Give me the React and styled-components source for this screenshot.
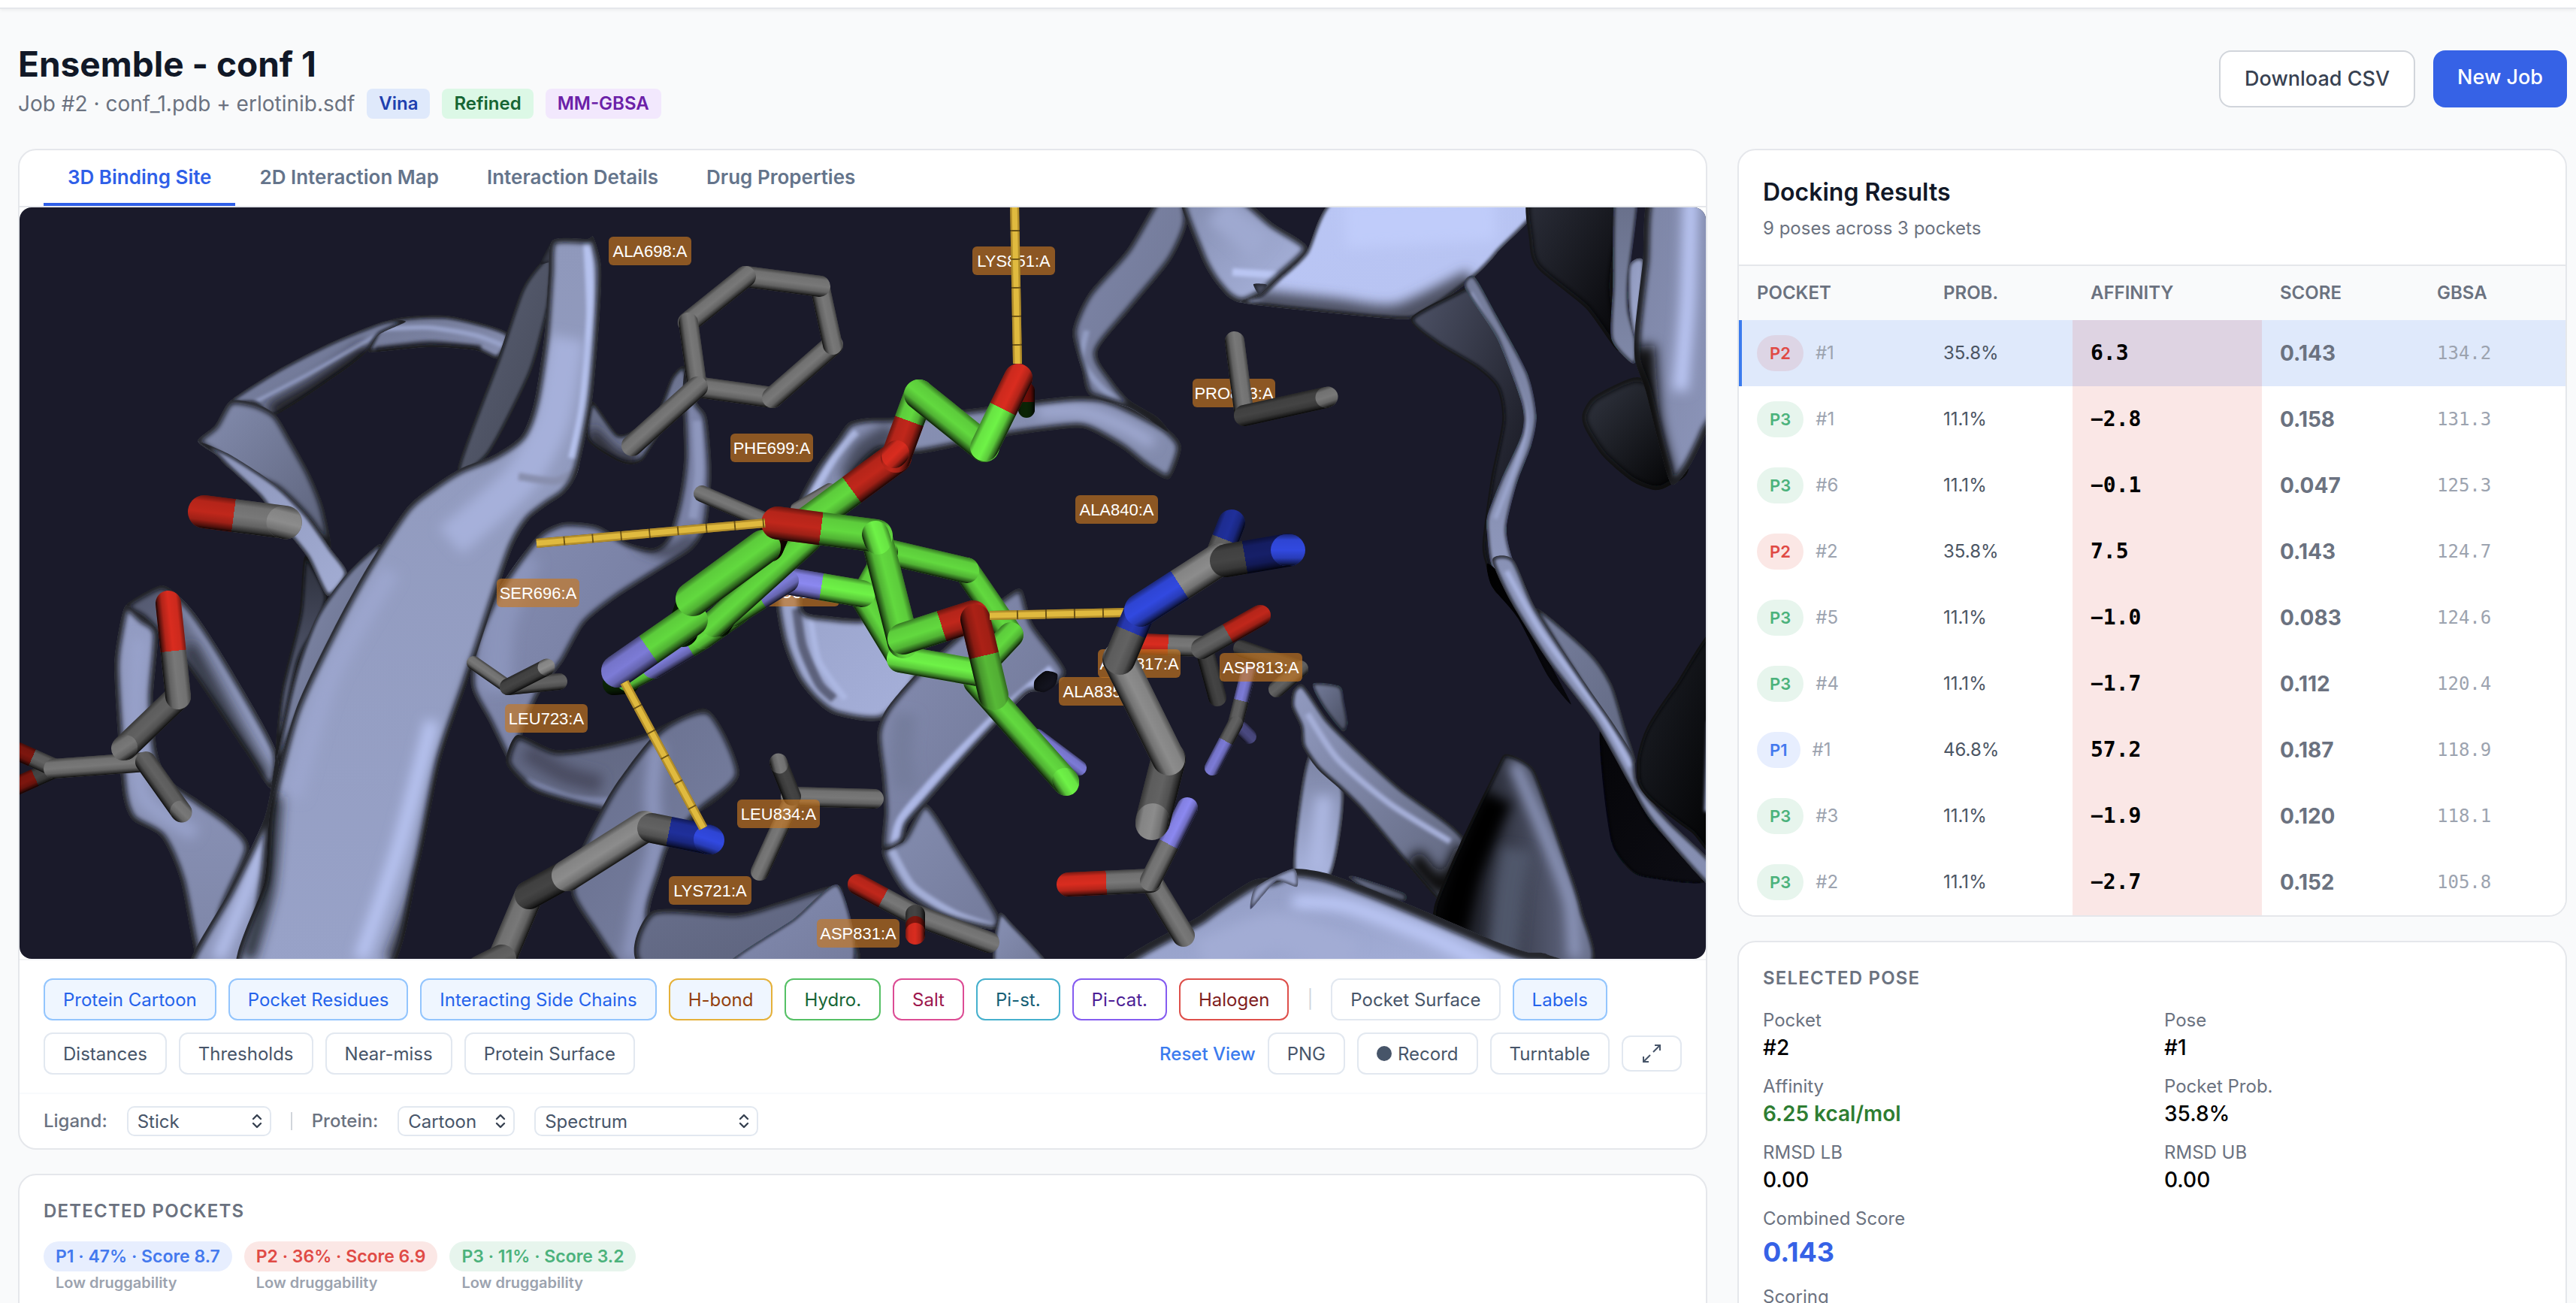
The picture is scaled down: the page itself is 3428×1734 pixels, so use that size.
import { useState } from "react";
import styled, { createGlobalStyle } from "styled-components";

const GlobalStyle = createGlobalStyle`
    * {
        box-sizing: border-box;
    }
    body {
        margin: 0;
        background: #f9fafb;
        color: #000;
        font-family: Inter, "Liberation Sans", sans-serif;
        font-size: 24px;
        line-height: 32px;
    }
    h1, h2, h3, p, dl, dd {
        margin: 0;
    }
    button, select {
        font-family: inherit;
    }
`

//---------------- molecule scene ----------------

// turns "x,y x,y" into numbers
const parse = (pts) => pts.split(" ").map((pt) => pt.split(",").map(Number))

// soft curve through all the points
const curve = (pts, closed) => {
    const p = parse(pts)
    const n = p.length
    const at = (i) => (closed ? p[(i + n) % n] : p[Math.max(0, Math.min(n - 1, i))])
    let d = `M${p[0]}`
    for (let i = 0; i < (closed ? n : n - 1); i++) {
        const [a, b, c, e] = [at(i - 1), at(i), at(i + 1), at(i + 2)]
        d += `C${b[0] + (c[0] - a[0]) / 8},${b[1] + (c[1] - a[1]) / 8} ${c[0] - (e[0] - b[0]) / 8},${c[1] - (e[1] - b[1]) / 8} ${c}`
    }
    return closed ? d + "Z" : d
}

// p: outline, a/b: fill from and to, dir: gradient vector, e: edge darkness width, h: lines of light or shade
const ribbons = [
    // far left loop
    { p: "167,806 214,779 240,795 265,824 306,888 367,998 360,1049 326,1000 255,895 210,843 190,823", a: "#50556b", b: "#8a93b6", e: 10, h: [["240,795 300,890 366,1010", 14, "#9aa4cc"], ["250,860 300,950 352,1036", 16, "#2a2d38"]] },
    { p: "167,806 156,850 152,888 156,966 163,1056 176,1091 214,1114 240,1172 265,1290 296,1290 296,1217 332,1130 306,1094 265,1065 224,1036 209,998 204,927 210,843 190,823", a: "#949dc4", b: "#7d85a6", dir: [0, 0, 0, 1], e: 12, h: [["185,850 180,950 190,1060 260,1110", 20, "#98a2cb"]] },
    // upper left loop
    { p: "490,466 510,430 546,421 602,421 676,443 663,477 632,466 571,462 505,468", a: "#6c738f", b: "#8991b4", e: 8, h: [["505,438 571,436 632,446 670,460", 6, "#9aa4cc"], ["500,466 571,458 640,464", 10, "#3a3e4d"]] },
    { p: "306,534 370,492 440,456 510,428 540,428 505,445 490,466 459,492 367,552 339,537", a: "#7b83a4", b: "#6b728f", e: 6, h: [["360,550 420,516 492,466", 24, "#1b1c24"], ["339,535 410,498 505,444", 4, "#9aa4cc"]] },
    { p: "406,740 436,793 420,840 398,882 368,1014 368,978 375,914 398,817", a: "#2c2f3b", b: "#6f7693", dir: [0, 0, 0, 1], e: 8 },
    { p: "263,587 286,566 306,534 339,537 367,552 388,586 413,631 431,676 440,730 408,689 367,650 306,624 288,606", a: "#858eb0", b: "#5a6078", e: 10 },
    { p: "263,587 306,605 367,645 408,685 440,730 462,763 436,793 408,740 367,690 345,660 306,624 288,606", a: "#8992b6", b: "#a3add4", e: 6 },
    { p: "505,724 462,763 423,817 398,880 380,950 366,1030 393,960 444,850 500,753", a: "#8790b2", b: "#5e647e", e: 6 },
    { p: "250,1290 306,1184 352,1088 368,1005 372,1050 358,1110 352,1172 326,1290", a: "#8c95ba", b: "#8c95ba", e: 12, h: [["290,1276 330,1180 354,1100", 16, "#b9c5f2"]] },
    // strands behind the phenyl ring
    { p: "788,534 822,577 846,570 874,548 893,502 910,487 915,520 870,591 855,613 838,618 817,611 781,584", a: "#5d637b", b: "#7c84a5", e: 8, h: [["784,575 820,610 850,612", 18, "#20222b"]] },
    { p: "913,488 927,534 941,556 947,627 941,698 922,731 879,759 822,795 779,830 750,880 720,920 699,966 691,998 686,1030 650,960 627,914 632,856 663,785 714,714 745,696 770,695 798,700 836,722 870,729 889,713 903,663 910,609 908,527", a: "#8a93b8", b: "#70779a", e: 10, h: [["850,722 890,735 925,715", 14, "#3a3e4d"], ["700,740 665,830 660,920", 40, "#8b94bb"], ["928,560 930,630 922,690", 12, "#8e97bd"]] },
    { p: "689,978 740,998 800,991 855,977 908,953 944,946 984,1030 932,1080 860,1090 798,1080 714,1056 683,1030 673,1011", a: "#5c627c", b: "#6d7491", e: 12, h: [["700,1040 760,1062 812,1066", 10, "#7c84a8"], ["700,1000 750,1030 800,1044", 24, "#484c60"]] },
    { p: "879,970 944,946 984,1030 932,1080 893,1123 879,1163 865,1210 860,1290 826,1290 790,1240 760,1190 769,1140 793,1090 822,1040", a: "#666d8b", b: "#7b83a5", e: 10, h: [["874,990 868,1060 872,1130 852,1200 838,1276", 20, "#8e97bf"]] },
    { p: "867,1213 980,1215 1037,1200 1116,1178 1124,1220 1132,1290 860,1290", a: "#69708d", b: "#5b617a", e: 10 },
    { p: "1116,1178 1132,1290 965,1290 1056,1223", a: "#848db2", b: "#747b9c", e: 4 },
    // loop behind the ligand
    { p: "1061,673 1085,623 1113,584 1130,562 1157,556 1195,555 1300,543 1381,532 1429,527 1467,529 1504,543 1553,570 1572,595 1556,637 1526,623 1493,597 1450,573 1424,570 1338,581 1223,604 1170,600 1130,640 1100,672", a: "#8991b5", b: "#8089aa", e: 12, h: [["1080,660 1110,610 1140,575", 10, "#b0bbe6"], ["1130,640 1150,600 1190,575", 30, "#454a5c"], ["1381,548 1440,548 1490,565 1535,590", 14, "#a5afd8"]] },
    { p: "1032,800 1042,857 1061,903 1085,933 1113,952 1176,957 1225,893 1190,820 1142,823 1104,820 1070,812 1066,760 1040,760", a: "#98a2c9", b: "#a6b0da", e: 12, h: [["1060,810 1068,860 1090,910 1110,930", 12, "#5b617a"], ["1078,820 1090,880 1125,930", 8, "#acb7e2"]] },
    { p: "1233,1070 1281,1140 1329,1217 1322,1237 1252,1220 1204,1190 1180,1153 1174,1130 1202,1115", a: "#858eb1", b: "#737a9a", e: 10, h: [["1186,1130 1215,1180 1270,1216 1322,1234", 10, "#a3add6"]] },
    { p: "1329,1217 1348,1230 1398,1290 1324,1290", a: "#8992b6", b: "#6f7694", e: 6 },
    { p: "1360,785 1375,830 1419,893 1391,920 1367,923 1324,967 1276,1020 1233,1070 1209,1097 1202,1120 1174,1130 1176,1080 1173,1033 1167,977 1180,943 1219,897 1270,850 1338,793", a: "#878fb4", b: "#6c7391", e: 10, h: [["1400,890 1330,950 1260,1020 1200,1090 1190,1130", 12, "#adb8e6"], ["1205,950 1200,1000 1205,1050", 30, "#757d9c"]] },
    { p: "1377,905 1391,893 1407,897 1404,912 1390,921 1377,918", a: "#08090c", b: "#1a1a2a", e: 2 },
    // top right
    { p: "1546,255 1572,255 1580,297 1558,347 1504,413 1461,468 1480,505 1504,533 1540,555 1555,575 1504,543 1450,526 1439,491 1427,441 1448,391 1500,331", a: "#7f87aa", b: "#6d7490", e: 10, h: [["1446,440 1440,480 1470,520 1530,560", 8, "#929cc2"]] },
    { p: "1570,255 1640,255 1694,297 1740,330 1702,370 1678,392 1653,403 1634,395 1613,370 1596,337", a: "#8089ab", b: "#adb8e2", e: 12, h: [["1640,362 1700,366", 10, "#bac6f3"], ["1620,280 1680,330", 40, "#9fa9d0"]] },
    { p: "1792,255 2050,255 1992,337 1960,370 1916,403 1881,423 1851,424 1775,417 1653,403 1678,392 1702,370 1737,337", a: "#bac6f5", b: "#b7c3f1", e: 6, h: [["1670,402 1775,414 1860,422 1960,375", 34, "#4d5163"], ["1790,300 1990,290", 60, "#c0ccfa"]] },
    { p: "1668,378 1686,379 1676,392", a: "#30333f", b: "#5a6078", e: 2 },
    { p: "1878,423 1949,383 1962,368 1992,420 2033,497 2045,553 2038,593 2019,643 2005,703 2014,747 2033,790 1992,790 1976,747 1973,720 1984,637 1999,560 1992,517 1965,490 1911,457", a: "#50556a", b: "#0a0a10", e: 8 },
    { p: "1949,383 1962,368 1992,420 2033,497 2045,553 2038,593 2019,643 2005,703 2014,747 2033,790 2003,790 1984,750 1979,713 1979,687 1998,637 2025,577 2025,537 1992,450", a: "#747c9a", b: "#919abf", dir: [0, 0, 0, 1], e: 4, h: [["1957,390 2000,470 2030,550 2024,600 1990,690", 5, "#9ea8d0"]] },
    { p: "2044,810 2115,867 2145,910 2163,967 2177,1013 2160,1010 2110,920", a: "#777f9e", b: "#606780", e: 6 },
    { p: "2130,970 2165,1030 2198,1093 2270,1172 2192,1168 2168,1157 2145,1123 2133,1043", a: "#050508", b: "#0d0d14", e: 4 },
    { p: "1979,750 2000,770 2050,860 2091,937 2060,900 2020,823 1985,780", a: "#000000", b: "#0a0a10", e: 2 },
    { p: "1986,745 2014,745 2044,810 2110,910 2145,960 2174,1007 2180,1043 2222,1093 2280,1150 2280,1185 2198,1093 2168,1043 2121,960 2060,880 2010,800", a: "#8992b6", b: "#858eb1", e: 6, h: [["2005,760 2050,840 2130,950 2170,1020", 7, "#a8b3df"]] },
    { p: "2038,255 2152,255 2146,380 2155,467 2110,410 2046,357 2035,320", a: "#2d303c", b: "#050507", dir: [0, 0, 1, 1], e: 10 },
    { p: "2149,255 2180,255 2168,370 2168,413 2177,450 2177,481 2168,481 2144,450 2146,380", a: "#666d87", b: "#8089a9", dir: [0, 0, 0, 1], e: 4 },
    { p: "2168,353 2188,350 2177,450 2168,413", a: "#8d96ba", b: "#a3add4", e: 3 },
    { p: "2179,502 2122,527 2106,550 2109,570 2133,607 2171,640 2201,652 2220,647 2247,623 2220,530", a: "#343844", b: "#000000", e: 12 },
    { p: "2197,255 2290,255 2290,520 2270,577 2247,623 2225,645 2210,600 2190,520 2176,480 2176,437 2186,350", a: "#7b83a3", b: "#8e97bc", e: 16, h: [["2250,262 2246,400 2236,520", 20, "#bdc9f7"], ["2188,460 2196,560 2216,640", 28, "#07070a"]] },
    { p: "2290,840 2228,913 2192,967 2179,1007 2180,1043 2198,1067 2250,1107 2290,1130", a: "#1f222a", b: "#000000", e: 8, h: [["2276,960 2272,1080", 8, "#a3add4"]] },
    // bottom right
    { p: "1795,1168 1807,1167 1868,1188 1866,1200 1820,1185", a: "#6b728e", b: "#4b5063", e: 4 },
    { p: "1741,1005 1788,1050 1771,1165 1721,1160", a: "#7a82a2", b: "#aab5df", dir: [0, 0, 0, 1], e: 6, h: [["1762,1060 1752,1160", 22, "#adb8e2"]] },
    { p: "1747,910 1783,913 1789,933 1794,963 1786,973 1760,940", a: "#747c9b", b: "#484d60", e: 4 },
    { p: "1721,918 1735,912 1765,955 1789,980 1824,1013 1866,1050 1950,1118 1925,1200 1913,1197 1866,1143 1813,1080 1783,1050 1753,1023 1733,993 1730,967 1718,940", a: "#929bc1", b: "#5d637a", e: 8, h: [["1740,950 1780,1010 1850,1070 1930,1120", 8, "#a5afd8"], ["1880,1140 1920,1180 1950,1130", 26, "#0c0c11"]] },
    { p: "2002,1004 2020,1008 2041,1023 2056,1060 2085,1143 2106,1210 2112,1290 1900,1290 1907,1217 1913,1193 1943,1123 1991,1023", a: "#000000", b: "#6c7390", dir: [0, 0, 1, 0], e: 8, h: [["2015,1015 2060,1120 2090,1200 2096,1276", 16, "#929bc1"], ["1930,1240 1950,1160 1992,1060", 44, "#000000"], ["2000,1276 2010,1180 2020,1130", 40, "#50566a"]] },
    { p: "1500,1300 1599,1217 1664,1173 1694,1167 1722,1156 1765,1162 1824,1183 1907,1217 1991,1253 2032,1267 2059,1270 2090,1300", a: "#8e98bf", b: "#a9b4de", e: 22, h: [["1720,1200 1790,1205 1900,1245 1990,1290", 18, "#bdc9f8"], ["1600,1276 1700,1240 1800,1276", 50, "#a2acd4"]] },
    { p: "1664,1210 1668,1185 1684,1172 1722,1156 1726,1180 1700,1172 1682,1190", a: "#8b94b9", b: "#a5afd8", e: 3 },
    // big strand in front
    { p: "719,350 735,340 732,400 724,437 705,500 650,605 609,624 663,476 694,386", a: "#5c6276", b: "#444857", e: 6 },
    { p: "719,350 735,320 737,345 727,350", a: "#1e2029", b: "#434756", e: 2 },
    { p: "735,320 781,318 790,316 800,354 798,420 788,534 769,627 752,656 729,672 704,692 683,727 658,798 622,908 587,1011 556,1159 510,1300 318,1300 352,1172 360,1075 393,946 444,837 490,753 541,676 576,647 612,624 658,605 694,579 711,534 724,450 730,367", a: "#8f98bb", b: "#98a2c8", dir: [0, 0, 0, 1], e: 12, h: [["782,322 786,420 776,540 762,610", 12, "#b6c2ee"], ["755,450 735,560 690,640 600,720", 46, "#a6b0da"], ["520,760 440,900 390,1060", 26, "#9ba5cd"], ["575,960 530,1130 480,1276", 18, "#bac6f4"], ["690,634 740,640 775,622", 10, "#888fae"], ["366,1060 356,1180 330,1276", 18, "#23252f"], ["640,880 590,1030 560,1170 520,1280", 14, "#1a1b23"]] },
]

const C = {
    gray: "#787878",
    mid: "#626262",
    dark: "#444444",
    light: "#8c8c8c",
    green: "#62d93f",
    lime: "#6ef247",
    forest: "#0a2405",
    red: "#c0271b",
    bright: "#d92c1f",
    maroon: "#7d160e",
    coal: "#240303",
    blue: "#3149e0",
    navy: "#1f2f9a",
    ink: "#161f68",
    violet: "#7c7bd6",
    lilac: "#8b88f0",
}

// [x1, y1, x2, y2, width, colour, colour of the far half, where it changes in %]
const backSticks = [
    [934, 657, 1018, 693, 22, C.gray],
    [1104, 652, 1061, 677, 18, C.gray],
    [630, 882, 676, 914, 18, C.gray],
    [744, 907, 676, 914, 22, C.mid],
    [727, 888, 676, 914, 22, C.dark],
    [726, 888, 728, 887, 21, C.light],
    [1652, 863, 1730, 890, 22, C.dark],
    [1730, 890, 1699, 917, 22, C.mid],
    [1605, 873, 1620, 928, 24, C.dark],
    [1518, 857, 1599, 860, 28, C.bright, C.gray, 45],
    [1677, 819, 1599, 863, 28, C.red, C.mid, 55],
    [1652, 970, 1662, 980, 20, "#4a4980"],
    [1661, 895, 1644, 963, 20, C.violet, C.mid, 55],
    [1613, 1022, 1644, 963, 20, C.violet, C.mid, 60],
    [1380, 980, 1436, 1022, 20, C.violet],
    [1052, 1060, 1163, 1063, 26, C.gray],
    [1052, 1070, 1011, 1160, 24, C.gray],
    [1036, 1015, 1054, 1060, 24, C.dark],
    [1036, 1014, 1037, 1018, 23, C.gray],
    [1028, 529, 928, 515, 28, C.gray],
    [1108, 459, 1028, 529, 28, C.gray],
    [1091, 381, 1108, 459, 26, C.gray],
    [992, 368, 1091, 381, 28, C.gray],
    [916, 429, 992, 368, 28, C.gray],
    [928, 515, 916, 429, 26, C.gray],
    [841, 593, 928, 515, 28, C.gray],
]

const frontSticks = [
    [1643, 454, 1656, 553, 26, C.gray],
    [1656, 553, 1764, 529, 28, C.dark],
    [1764, 529, 1767, 528, 27, C.gray],
    // left residues
    [272, 681, 380, 695, 44, C.red, C.gray, 36],
    [376, 695, 380, 696, 43, C.light],
    [22, 1046, 71, 1024, 24, C.maroon, C.dark, 50],
    [24, 1000, 71, 1021, 24, C.maroon, C.mid, 40],
    [71, 1023, 194, 1014, 26, C.gray],
    [194, 1014, 241, 1080, 28, C.mid],
    [240, 1079, 242, 1081, 27, C.gray],
    [237, 927, 166, 995, 34, C.mid],
    [167, 994, 164, 996, 32, C.gray],
    [224, 803, 237, 927, 34, C.bright, C.gray, 51],
    // LYS721
    [704, 1191, 668, 1276, 38, C.gray],
    [704, 1191, 755, 1163, 38, C.dark],
    [668, 1276, 640, 1290, 38, C.mid],
    [858, 1100, 755, 1165, 42, C.light],
    [942, 1117, 868, 1102, 40, C.navy, C.mid, 70],
    [942, 1117, 945, 1118, 38, C.blue],
    // ASP831
    [1216, 1217, 1316, 1254, 28, C.gray],
    [1142, 1177, 1216, 1217, 28, C.red, C.gray, 45],
    [1218, 1217, 1218, 1243, 26, C.dark],
    [1218, 1232, 1218, 1243, 26, C.maroon],
    [1218, 1241, 1218, 1244, 26, C.bright],
    // side chain at the bottom
    [1531, 1172, 1575, 1245, 30, C.gray],
    [1422, 1177, 1531, 1172, 32, C.bright, C.gray, 46],
    [1580, 1075, 1531, 1172, 28, C.lilac, C.gray, 50],
    // far ring of the ligand
    [1300, 907, 1418, 1040, 36, C.green],
    [1417, 1039, 1419, 1042, 34, C.lime],
    [1286, 759, 1345, 845, 34, C.green],
    [1345, 845, 1300, 893, 34, C.green],
    [1180, 734, 1286, 759, 34, C.green],
    [1147, 793, 1180, 734, 30, C.green],
    [1147, 793, 1198, 877, 34, C.green],
    [1198, 877, 1300, 895, 36, C.lime],
    [1047, 773, 1147, 790, 36, C.lilac, C.lime, 46],
    [817, 910, 836, 908, 30, C.forest],
    [835, 905, 870, 887, 30, C.green],
    [870, 887, 935, 848, 32, C.violet, C.green, 70],
    [935, 848, 982, 815, 32, C.green],
    [975, 818, 1047, 773, 32, C.green, C.violet, 50],
    [960, 835, 985, 795, 24, C.forest],
    [951, 830, 1075, 718, 36, C.green],
    [1023, 728, 1034, 702, 40, C.coal],
    [908, 840, 922, 800, 42, C.forest],
    [822, 893, 920, 825, 44, C.violet, C.green, 42],
    [922, 797, 1016, 728, 46, C.green],
    // ether chain
    [1366, 545, 1366, 520, 22, C.forest, "#6e0d08", 40],
    [1075, 695, 1192, 609, 42, C.green, C.red, 50],
    [1223, 525, 1192, 609, 40, C.green, C.red, 42],
    [1190, 606, 1193, 603, 34, C.bright],
    [1223, 525, 1310, 595, 40, C.green],
    [1355, 503, 1310, 595, 38, C.bright, C.lime, 45],
    // front ring
    [1166, 713, 1202, 855, 42, C.green],
    [1035, 696, 1166, 713, 44, C.red, C.green, 44],
    [1165, 711, 1168, 720, 36, C.lime],
    [1202, 850, 1295, 820, 42, C.green, C.red, 55],
    [1298, 824, 1322, 925, 40, "#ab2116", "#57b937", 48],
]

const arginine = [
    [1639, 696, 1620, 745, 36, C.navy, C.mid, 45],
    [1555, 1010, 1534, 1093, 46, C.mid],
    [1534, 1091, 1533, 1096, 44, C.light],
    [1489, 877, 1555, 1010, 44, C.light],
    [1516, 815, 1490, 877, 42, "#283ab8", C.mid, 42],
    [1622, 745, 1518, 812, 44, C.light, C.blue, 50],
    [1714, 732, 1632, 746, 44, C.ink, C.dark, 70],
    [1712, 732, 1716, 732, 42, C.blue],
]

const bonds = [
    [1350, 270, 1354, 484],
    [714, 723, 1018, 696],
    [1317, 819, 1500, 815],
    [831, 908, 936, 1102],
]

const residues = [
    ["ALA698:A", 865, 334],
    ["LYS851:A", 1349, 347],
    ["PRO853:A", 1642, 523],
    ["PHE699:A", 1027, 596],
    ["ALA840:A", 1486, 678],
    ["SER696:A", 716, 789],
    ["LEU820:A", 1062, 788],
    ["LEU723:A", 727, 956],
    ["ALA835:A", 1464, 920],
    ["ARG817:A", 1516, 883],
    ["ASP813:A", 1678, 888],
    ["LEU834:A", 1036, 1083],
    ["LYS721:A", 945, 1185],
    ["ASP831:A", 1142, 1242],
]

const Ribbon = ({ id, p, a, b, dir = [0, 0, 1, 1], e, h = [] }) => {
    const d = curve(p, true)
    return (
        <g clipPath={`url(#clip${id})`}>
            <defs>
                <clipPath id={`clip${id}`}><path d={d} /></clipPath>
                <linearGradient id={`fill${id}`} x1={dir[0]} y1={dir[1]} x2={dir[2]} y2={dir[3]}>
                    <stop offset="0" stopColor={a} />
                    <stop offset="1" stopColor={b} />
                </linearGradient>
            </defs>
            <path d={d} fill={`url(#fill${id})`} />
            {h.map(([pts, w, color]) => (
                <path key={pts} d={curve(pts)} fill="none" stroke={color} strokeWidth={w} filter={w > 12 ? "url(#soft)" : "url(#fine)"} />
            ))}
            <path d={d} fill="none" stroke="#08090d" strokeOpacity="0.85" strokeWidth={e} filter={e > 8 ? "url(#edge)" : "url(#fine)"} />
        </g>
    )
}

// a bond cylinder, lit from above
const Stick = ({ id, s }) => {
    const [x1, y1, x2, y2, w, color, far, split] = s
    const len = Math.hypot(x2 - x1, y2 - y1) || 1
    let nx = -(y2 - y1) / len
    let ny = (x2 - x1) / len
    if (ny < 0 || (ny === 0 && nx < 0)) {
        nx = -nx
        ny = -ny
    }
    const r = w / 2
    const cx = (x1 + x2) / 2
    const cy = (y1 + y2) / 2
    const line = { x1, y1, x2, y2, strokeWidth: w, strokeLinecap: "round" }
    return (
        <g>
            <defs>
                {far && (
                    <linearGradient id={`half${id}`} gradientUnits="userSpaceOnUse" x1={x1} y1={y1} x2={x2} y2={y2}>
                        <stop offset={split / 100} stopColor={color} />
                        <stop offset={split / 100} stopColor={far} />
                    </linearGradient>
                )}
                <linearGradient id={`shade${id}`} gradientUnits="userSpaceOnUse" x1={cx - nx * r} y1={cy - ny * r} x2={cx + nx * r} y2={cy + ny * r}>
                    <stop offset="0" stopColor="#000" stopOpacity="0.45" />
                    <stop offset="0.18" stopColor="#000" stopOpacity="0.06" />
                    <stop offset="0.5" stopColor="#000" stopOpacity="0" />
                    <stop offset="0.75" stopColor="#000" stopOpacity="0.18" />
                    <stop offset="0.92" stopColor="#000" stopOpacity="0.6" />
                    <stop offset="1" stopColor="#000" stopOpacity="0.9" />
                </linearGradient>
            </defs>
            <line {...line} stroke={far ? `url(#half${id})` : color} />
            <line {...line} stroke={`url(#shade${id})`} />
        </g>
    )
}

const BindingSite = () => (
    <Scene viewBox="26 276 2244 1000" preserveAspectRatio="xMidYMid slice" role="img" aria-label="3D binding site">
        <defs>
            <filter id="edge" x="-20%" y="-20%" width="140%" height="140%"><feGaussianBlur stdDeviation="3" /></filter>
            <filter id="soft" filterUnits="userSpaceOnUse" x="0" y="200" width="2400" height="1200"><feGaussianBlur stdDeviation="8" /></filter>
            <filter id="fine" filterUnits="userSpaceOnUse" x="0" y="200" width="2400" height="1200"><feGaussianBlur stdDeviation="2" /></filter>
        </defs>
        {ribbons.map((item, i) => <Ribbon key={i} id={i} {...item} />)}
        {backSticks.map((item, i) => <Stick key={i} id={`b${i}`} s={item} />)}
        {residues.map(([name, x, y]) => (
            <g key={name}>
                <rect x={x - 55} y={y - 19} width="110" height="38" rx="6" fill="#c87820" fillOpacity="0.66" />
                <ResidueText x={x} y={y + 8}>{name}</ResidueText>
            </g>
        ))}
        {frontSticks.map((item, i) => <Stick key={i} id={`f${i}`} s={item} />)}
        {bonds.map(([x1, y1, x2, y2]) => (
            <g key={x1}>
                <line x1={x1} y1={y1} x2={x2} y2={y2} stroke="#6d5415" strokeWidth="12" />
                <line x1={x1} y1={y1} x2={x2} y2={y2} stroke="#b48f2b" strokeWidth="12" strokeDasharray="36 2" />
                <line x1={x1} y1={y1} x2={x2} y2={y2} stroke="#e0ba3f" strokeWidth="7" strokeDasharray="36 2" />
            </g>
        ))}
        {arginine.map((item, i) => <Stick key={i} id={`a${i}`} s={item} />)}
    </Scene>
)

//---------------- page data ----------------

const tones = {
    on: ["#93c5fd", "#2563eb", "#eff6ff"],
    off: ["#e2e8f0", "#475569", "#fff"],
    hbond: ["#e5b13a", "#92400e", "#eff6ff"],
    hydro: ["#55c065", "#166534", "#fff"],
    salt: ["#dc4c94", "#9d174d", "#fff"],
    pist: ["#45b0cd", "#155e75", "#fff"],
    picat: ["#855cf0", "#4c1d95", "#fff"],
    halogen: ["#de4f4a", "#7f1d1d", "#fff"],
}

const pocketColors = {
    P1: ["#4479ee", "#e7eefe"],
    P2: ["#e04a45", "#fbe7e5"],
    P3: ["#4cb27c", "#e7f5ed"],
}

const tabs = ["3D Binding Site", "2D Interaction Map", "Interaction Details", "Drug Properties"]

const toggles = [
    ["Protein Cartoon", "on"],
    ["Pocket Residues", "on"],
    ["Interacting Side Chains", "on"],
    ["H-bond", "hbond"],
    ["Hydro.", "hydro"],
    ["Salt", "salt"],
    ["Pi-st.", "pist"],
    ["Pi-cat.", "picat"],
    ["Halogen", "halogen"],
]

const poses = [
    ["P2", "#1", "35.8%", "6.3", "0.143", "134.2"],
    ["P3", "#1", "11.1%", "−2.8", "0.158", "131.3"],
    ["P3", "#6", "11.1%", "−0.1", "0.047", "125.3"],
    ["P2", "#2", "35.8%", "7.5", "0.143", "124.7"],
    ["P3", "#5", "11.1%", "−1.0", "0.083", "124.6"],
    ["P3", "#4", "11.1%", "−1.7", "0.112", "120.4"],
    ["P1", "#1", "46.8%", "57.2", "0.187", "118.9"],
    ["P3", "#3", "11.1%", "−1.9", "0.120", "118.1"],
    ["P3", "#2", "11.1%", "−2.7", "0.152", "105.8"],
]

const pockets = [
    ["P1", "P1 · 47% · Score 8.7"],
    ["P2", "P2 · 36% · Score 6.9"],
    ["P3", "P3 · 11% · Score 3.2"],
]

const StyleSelect = ({ label, options, size }) => (
    <SelectBox $size={size}>
        <Select aria-label={label}>
            {options.map((item) => <option key={item}>{item}</option>)}
        </Select>
        <Arrows viewBox="0 0 14 20">
            <path d="M2 7l5-5 5 5M2 13l5 5 5-5" fill="none" stroke="currentColor" strokeWidth="2.4" strokeLinecap="round" strokeLinejoin="round" />
        </Arrows>
    </SelectBox>
)

const App = () => {

    const [tab, setTab] = useState(tabs[0])
    const [selected, setSelected] = useState(0)

    return (
        <Page>
            <GlobalStyle />
            <TopBar />
            <Main>
                <Header>
                    <div>
                        <Title>Ensemble - conf 1</Title>
                        <Subtitle>
                            <span>Job #2 · conf_1.pdb + erlotinib.sdf</span>
                            <Badge $color="#1e40af" $bg="#dfe9fb">Vina</Badge>
                            <Badge $color="#166534" $bg="#dcf8e6">Refined</Badge>
                            <Badge $color="#6b21a8" $bg="#f2e8fd">MM-GBSA</Badge>
                        </Subtitle>
                    </div>
                    <Actions>
                        <OutlineButton>Download CSV</OutlineButton>
                        <PrimaryLink href="#new">New Job</PrimaryLink>
                    </Actions>
                </Header>

                <Columns>
                    <Wide>
                        <Card>
                            <Tabs role="tablist">
                                {tabs.map((item) => (
                                    <Tab key={item} role="tab" aria-selected={tab === item} $active={tab === item} onClick={() => setTab(item)}>{item}</Tab>
                                ))}
                            </Tabs>
                            <BindingSite />
                            <Toolbar>
                                {toggles.map(([name, tone]) => <Toggle key={name} $tone={tones[tone]}>{name}</Toggle>)}
                                <Bar>|</Bar>
                                <Toggle $tone={tones.off}>Pocket Surface</Toggle>
                                <Toggle $tone={tones.on}>Labels</Toggle>
                                <SecondRow>
                                    {["Distances", "Thresholds", "Near-miss", "Protein Surface"].map((name) => (
                                        <Toggle key={name} $tone={tones.off}>{name}</Toggle>
                                    ))}
                                    <Spacer />
                                    <ResetButton>Reset View</ResetButton>
                                    <Toggle $tone={tones.off}>PNG</Toggle>
                                    <Toggle $tone={tones.off}><Dot />Record</Toggle>
                                    <Toggle $tone={tones.off}>Turntable</Toggle>
                                    <IconButton aria-label="Fullscreen">
                                        <svg width="28" height="28" viewBox="0 0 28 28" fill="none" stroke="currentColor" strokeWidth="2">
                                            <path d="M16 12L25 3M18 3h7v7M12 16l-9 9M3 18v7h7" />
                                        </svg>
                                    </IconButton>
                                </SecondRow>
                            </Toolbar>
                            <StyleRow>
                                <span>Ligand:</span>
                                <StyleSelect label="Ligand" options={["Stick", "Sphere", "Line"]} size={192} />
                                <Divider />
                                <span>Protein:</span>
                                <StyleSelect label="Protein" options={["Cartoon", "Line"]} size={156} />
                                <StyleSelect label="Protein colour" options={["Spectrum", "Chain", "Residue"]} size={298} />
                            </StyleRow>
                        </Card>

                        <PocketCard>
                            <SmallTitle>Detected Pockets</SmallTitle>
                            <PocketList>
                                {pockets.map(([id, text]) => (
                                    <div key={id}>
                                        <PocketPill $colors={pocketColors[id]}>{text}</PocketPill>
                                        <PocketNote>Low druggability</PocketNote>
                                    </div>
                                ))}
                            </PocketList>
                        </PocketCard>
                    </Wide>

                    <Side>
                        <Card>
                            <CardHead>
                                <CardTitle>Docking Results</CardTitle>
                                <p>9 poses across 3 pockets</p>
                            </CardHead>
                            <Table>
                                <thead>
                                    <tr>
                                        <Th $share={248}>Pocket</Th>
                                        <Th $share={196}>Prob.</Th>
                                        <Th $share={252}>Affinity</Th>
                                        <Th $share={209}>Score</Th>
                                        <Th $share={195}>GBSA</Th>
                                    </tr>
                                </thead>
                                <tbody>
                                    {poses.map(([id, pose, prob, affinity, score, gbsa], i) => (
                                        <Row key={i} $selected={i === selected} onClick={() => setSelected(i)}>
                                            <td><Pill $colors={pocketColors[id]} $faded={i === selected}>{id}</Pill><Pose>{pose}</Pose></td>
                                            <Prob>{prob}</Prob>
                                            <Affinity>{affinity}</Affinity>
                                            <Score>{score}</Score>
                                            <Gbsa>{gbsa}</Gbsa>
                                        </Row>
                                    ))}
                                </tbody>
                            </Table>
                        </Card>

                        <PoseCard>
                            <SmallTitle>Selected Pose</SmallTitle>
                            <Facts>
                                <div><dt>Pocket</dt><Value>#2</Value></div>
                                <div><dt>Pose</dt><Value>#1</Value></div>
                                <div><dt>Affinity</dt><Value $color="#2e7d32" $weight={600}>6.25 kcal/mol</Value></div>
                                <div><dt>Pocket Prob.</dt><Value>35.8%</Value></div>
                                <div><dt>RMSD LB</dt><Value>0.00</Value></div>
                                <div><dt>RMSD UB</dt><Value>0.00</Value></div>
                                <FullFact><dt>Combined Score</dt><BigValue>0.143</BigValue></FullFact>
                                <FullFact><dt>Scoring</dt></FullFact>
                            </Facts>
                        </PoseCard>
                    </Side>
                </Columns>
            </Main>
        </Page>
    )
}

const Page = styled.div`
    height: 100vh;
    overflow: hidden;
`
const TopBar = styled.div`
    height: 12px;
    background: #fff;
    border-bottom: 2px solid #e5e7eb;
    box-shadow: 0 2px 4px rgba(0, 0, 0, 0.05);
`
const Main = styled.main`
    padding: 40px 12px 0 24px;
`
const Header = styled.header`
    display: flex;
    justify-content: space-between;
    align-items: center;
    margin-bottom: 40px;
`
const Title = styled.h1`
    font-size: 46px;
    line-height: 66px;
    font-weight: 700;
    color: #111827;
`
const Subtitle = styled.div`
    display: flex;
    align-items: center;
    gap: 16px;
    font-size: 28px;
    line-height: 40px;
    color: #6b7280;
`
const Badge = styled.span`
    padding: 0 16px;
    border-radius: 8px;
    font-size: 24px;
    font-weight: 600;
    color: ${(props) => props.$color};
    background: ${(props) => props.$bg};
`
const Actions = styled.div`
    display: flex;
    gap: 24px;
`
const OutlineButton = styled.button`
    padding: 16px 32px;
    border: 2px solid #d1d5db;
    border-radius: 16px;
    background: #fff;
    color: #374151;
    font-size: 27px;
    line-height: 40px;
    font-weight: 500;
`
const PrimaryLink = styled.a`
    padding: 16px 32px;
    border-radius: 16px;
    background: #3662e6;
    color: #fff;
    font-size: 27px;
    line-height: 40px;
    font-weight: 500;
    text-decoration: none;
`
const Columns = styled.div`
    display: grid;
    grid-template-columns: repeat(3, 1fr);
    gap: 40px;
`
const Side = styled.div`
    display: flex;
    flex-direction: column;
    gap: 32px;
    min-width: 0;
`
const Wide = styled(Side)`
    grid-column: span 2;
`
const Card = styled.section`
    background: #fff;
    border: 2px solid #e5e7eb;
    border-radius: 24px;
    overflow: hidden;
`
const Tabs = styled.div`
    display: flex;
    padding: 0 32px;
    border-bottom: 2px solid #e5e7eb;
`
const Tab = styled.button`
    height: 74px;
    padding: 0 32px;
    border: 0;
    border-bottom: 4px solid ${(props) => (props.$active ? "#2f5fe8" : "transparent")};
    background: none;
    color: ${(props) => (props.$active ? "#2f5fe8" : "#64748b")};
    font-size: 26px;
    font-weight: 600;
`
const Scene = styled.svg`
    display: block;
    width: 100%;
    height: 1000px;
    border-radius: 16px;
    background: #1a1a2a;
`
const ResidueText = styled.text`
    fill: #fff;
    font-family: "Liberation Sans", sans-serif;
    font-size: 22px;
    text-anchor: middle;
`
const Toolbar = styled.div`
    display: flex;
    flex-wrap: wrap;
    align-items: center;
    gap: 16px;
    padding: 24px 32px;
    border-top: 2px solid #f3f4f6;
`
const Toggle = styled.button`
    display: flex;
    align-items: center;
    gap: 8px;
    height: 56px;
    padding: 0 24px;
    border: 2px solid ${(props) => props.$tone[0]};
    border-radius: 12px;
    color: ${(props) => props.$tone[1]};
    background: ${(props) => props.$tone[2]};
    font-size: 24px;
`
const Bar = styled.span`
    margin: 0 8px;
    color: #d1d5db;
`
const SecondRow = styled.div`
    display: flex;
    align-items: center;
    gap: 16px;
    width: 100%;
`
const Spacer = styled.div`
    flex: 1;
`
const ResetButton = styled.button`
    padding: 0;
    border: 0;
    background: none;
    color: #3b7bee;
    font-size: 24px;
    font-weight: 500;
`
const Dot = styled.span`
    width: 20px;
    height: 20px;
    border-radius: 50%;
    background: #475569;
`
const IconButton = styled.button`
    display: flex;
    align-items: center;
    justify-content: center;
    width: 80px;
    height: 48px;
    padding: 0;
    border: 2px solid #e2e8f0;
    border-radius: 12px;
    background: #fff;
    color: #475569;
`
const StyleRow = styled.div`
    display: flex;
    align-items: center;
    gap: 26px;
    padding: 16px 32px;
    border-top: 2px solid #f8fafc;
    color: #6b7280;
    font-weight: 500;
`
const SelectBox = styled.div`
    position: relative;
    width: ${(props) => props.$size}px;
`
const Select = styled.select`
    display: block;
    width: 100%;
    height: 40px;
    padding: 0 12px;
    border: 2px solid #e2e8f0;
    border-radius: 10px;
    appearance: none;
    background: #fff;
    color: #475569;
    font-size: 24px;
`
const Arrows = styled.svg`
    position: absolute;
    top: 10px;
    right: 12px;
    width: 14px;
    height: 20px;
    color: #374151;
    pointer-events: none;
`
const Divider = styled.span`
    width: 2px;
    height: 24px;
    background: #d1d5db;
`
const PocketCard = styled(Card)`
    min-height: 240px;
    padding: 32px;
`
const PoseCard = styled(Card)`
    padding: 32px;
`
const SmallTitle = styled.h3`
    margin-bottom: 24px;
    color: #6b7280;
    font-size: 24px;
    line-height: 32px;
    font-weight: 600;
    letter-spacing: 0.05em;
    text-transform: uppercase;
`
const PocketList = styled.div`
    display: flex;
    gap: 16px;
`
const PocketPill = styled.div`
    padding: 0 16px;
    border-radius: 20px;
    color: ${(props) => props.$colors[0]};
    background: ${(props) => props.$colors[1]};
    font-size: 23px;
    line-height: 40px;
    font-weight: 600;
`
const PocketNote = styled.div`
    padding-left: 16px;
    color: #9ca3af;
    font-size: 20px;
    line-height: 30px;
    font-weight: 600;
`
const CardHead = styled.div`
    padding: 32px;
    border-bottom: 2px solid #e5e7eb;
    color: #6b7280;
`
const CardTitle = styled.h2`
    margin-bottom: 8px;
    color: #111827;
    font-size: 32px;
    line-height: 48px;
    font-weight: 600;
`
const Table = styled.table`
    width: 100%;
    table-layout: fixed;
    border-collapse: collapse;
    text-align: left;

    td {
        height: 88px;
        padding: 0 24px;
    }
`
const Th = styled.th`
    width: ${(props) => props.$share / 11}%;
    height: 72px;
    padding: 0 24px;
    background: #f9fafb;
    color: #6b7280;
    font-weight: 600;
    text-transform: uppercase;
`
const Row = styled.tr`
    background: ${(props) => (props.$selected ? "#dfe9fb" : "#fff")};

    td:first-child {
        box-shadow: ${(props) => (props.$selected ? "inset 4px 0 0 #3b7bee" : "none")};
    }
`
const Pill = styled.span`
    display: inline-block;
    padding: 0 17px;
    border-radius: 24px;
    color: ${(props) => props.$colors[0]};
    background: ${(props) => (props.$faded ? "#ddd5e5" : props.$colors[1])};
    font-size: 22px;
    line-height: 48px;
    font-weight: 600;
`
const Pose = styled.span`
    margin-left: 16px;
    color: #9ca3af;
`
const Prob = styled.td`
    color: #4b5563;
`
const Affinity = styled.td`
    background: rgba(214, 69, 58, 0.13);
    font-family: "DejaVu Sans Mono", monospace;
    font-size: 28px;
    font-weight: 700;
`
const Score = styled.td`
    color: #6b7280;
    font-size: 28px;
    font-weight: 700;
`
const Gbsa = styled.td`
    color: #9ca3af;
    font-family: "DejaVu Sans Mono", monospace;
`
const Facts = styled.dl`
    display: grid;
    grid-template-columns: 1fr 1fr;
    gap: 16px 32px;

    dt {
        color: #6b7280;
    }
`
const FullFact = styled.div`
    grid-column: span 2;
`
const Value = styled.dd`
    color: ${(props) => props.$color || "#000"};
    font-size: 28px;
    line-height: 40px;
    font-weight: ${(props) => props.$weight || 500};
`
const BigValue = styled.dd`
    color: #3662e6;
    font-size: 36px;
    line-height: 56px;
    font-weight: 700;
`

export default App
